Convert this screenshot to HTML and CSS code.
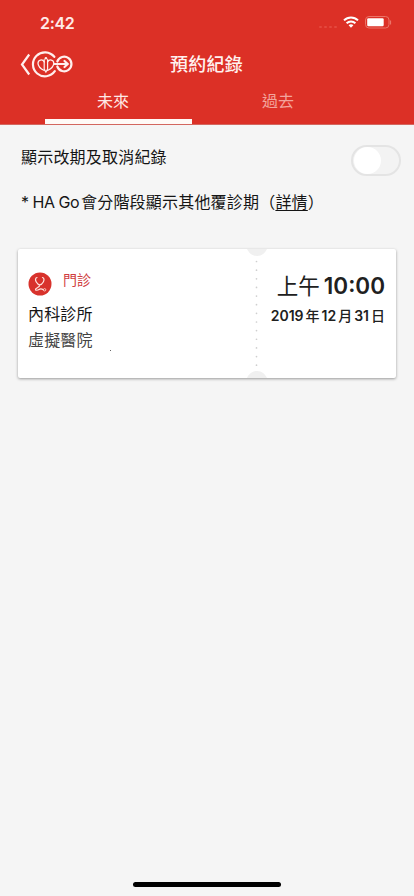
FILE: index.html
```html
<!DOCTYPE html>
<html lang="zh-Hant">
<head>
<meta charset="utf-8">
<meta name="viewport" content="width=device-width, initial-scale=1">
<title>預約紀錄</title>
<link rel="stylesheet" href="styles.css">
</head>
<body>
<header class="header">
  <div class="status">
    <span class="clock">2:42</span>
    <div class="indicators">
      <span class="signal"><i></i><i></i><i></i><i></i></span>
      <svg class="wifi" width="16" height="12" viewBox="0 0 16 12" fill="none" stroke="#fff" stroke-width="2">
        <path d="M1 4.400C5 .4 11 .4 15 4.400M3.600 7.200c2.500-2.400 6.300-2.400 8.800 0"/>
        <path d="M5.600 9.300c1.300-1.300 3.500-1.300 4.800 0L8 11.700z" fill="#fff" stroke="none"/>
      </svg>
      <svg class="battery" width="27" height="13" viewBox="0 0 27 13" fill="none">
        <rect x=".5" y=".5" width="23.500" height="11.500" rx="3.500" stroke="#ec7468"/>
        <rect x="2.200" y="2.200" width="16.500" height="8.100" rx="1.200" fill="#fff"/>
        <path d="M25.500 4.500v4" stroke="#ec7468" stroke-width="1.200"/>
      </svg>
    </div>
  </div>
  <div class="navbar">
    <a class="back">
      <svg width="53" height="28" viewBox="0 0 53 28" fill="none" stroke="#ffefed" stroke-linecap="round">
        <path d="M9.200 4.500L2 14.500l7.200 10" stroke-width="2.200" stroke-linecap="butt"/>
        <path d="M34.300 6.800A12 12 0 1 0 34.800 21.200" stroke-width="2.200"/>
        <path d="M37.300 11.500a7.300 7.300 0 1 1 0 5" stroke-width="2.200"/>
        <path d="M34.500 14h12.500M44.500 11l3.200 3-3.200 3" stroke-width="2.200"/>
        <path d="M24.300 20.500c-4.500-2.200-6.300-4.600-6.300-7.300 0-3.500 4.500-4.600 6.300-1.200M27.500 20.500c4.500-2.200 6.300-4.600 6.300-7.300 0-3.500-4.500-4.600-6.300-1.200" stroke-width="1.300"/>
        <path d="M24.200 9.500v9.500l1.700 3 1.700-3V9.500" stroke-width="1.200"/>
        <circle cx="25.900" cy="8.200" r="1.300" fill="#ffefed" stroke="none"/>
      </svg>
    </a>
    <h1 class="title">預約紀錄</h1>
  </div>
  <nav class="tabs">
    <a class="tab tab-active"><span>未來</span></a>
    <a class="tab"><span>過去</span></a>
  </nav>
</header>
<main class="content">
  <div class="option">
    <span class="option-label">顯示改期及取消紀錄</span>
    <span class="toggle"><span class="knob"></span></span>
  </div>
  <p class="note"><span class="latin">* HA Go</span><span>會分階段顯示其他覆診期</span><span>（</span><a class="link">詳情</a>）</p>
  <article class="card">
    <section class="place">
      <div class="kind">
        <svg width="24" height="24" viewBox="0 0 24 24" fill="none">
          <circle cx="12" cy="12" r="11.500" fill="#d8322c"/>
          <path d="M9 5.500C6.800 6 7.500 8.500 8.300 10s2 2.800 3.500 2.800 2.700-1.300 3.500-2.800 1.300-4-.8-4.500M11.800 12.800c.2 3-4.300 2.700-4.300 4.700 0 1.200 2.300.8 3.500 0 1.700-1.100 3-.6 4.300.3" stroke="#ffe4df" stroke-width="1.200" stroke-linecap="round"/>
          <circle cx="16.600" cy="17.800" r="1.200" stroke="#ffd0ca" stroke-width=".9"/>
        </svg>
        <span class="kind-name">門診</span>
      </div>
      <div class="clinic">內科診所</div>
      <div class="hospital"><span>虛擬醫院</span><i class="speck"></i></div>
    </section>
    <div class="perforation">
      <svg width="20" height="129" viewBox="0 0 20 129">
        <path d="M0 0h20c-2 4-5 7-10 7S2 4 0 0zM0 129h20c-2-4-5-7-10-7s-8 3-10 7z" fill="#f0f0f0"/>
        <path d="M9.500 12.500V119" stroke="#cfcfcf" stroke-width="1.700" stroke-linecap="round" stroke-dasharray="0 8.640"/>
      </svg>
    </div>
    <section class="when">
      <div class="time"><span>上午</span><b class="time-num">10:00</b></div>
      <div class="date"><b>2019</b><span>年</span><b>12</b><span>月</span><b>31</b><span>日</span></div>
    </section>
  </article>
</main>
<footer class="home"><span class="home-bar"></span></footer>
</body>
</html>
```

FILE: styles.css
```css
* { box-sizing: border-box; }
body {
  margin: 0;
  height: 896px;
  display: flex;
  flex-direction: column;
  overflow: hidden;
  background: #f5f5f5;
  color: #151515;
  font-family: Inter, "Noto Sans CJK TC", sans-serif;
  font-size: 16px;
}
.header {
  height: 125px;
  background: #dc3026;
  color: #fff;
  border-bottom: 1px solid #d3675f;
}
.status {
  height: 46px;
  display: flex;
  justify-content: space-between;
  padding: 0 22px 0 40px;
}
.clock { font-size: 16px; font-weight: 600; line-height: 46px; letter-spacing: -.3px; color: #ffeae7; }
.indicators { display: flex; align-items: flex-start; padding-top: 16px; }
.signal { display: flex; gap: 2px; padding: 10px 6px 0 0; }
.signal i { width: 3px; height: 2px; border-radius: 1px; background: #e4483e; }
.wifi { margin-right: 6px; }
.navbar {
  height: 36px;
  display: grid;
  grid-template-columns: 1fr auto 1fr;
  align-items: center;
}
.back { padding-left: 20px; display: flex; }
.title { margin: 0; padding: 2px 1px 0 0; font-size: 18px; line-height: 34px; font-weight: 500; letter-spacing: .3px; color: #fff1ef; }
.tabs { height: 42px; display: flex; gap: 18px; padding-left: 45px; }
.tab { width: 147px; padding-right: 11px; text-align: center; line-height: 38px; color: #f3a49c; }
.tab-active { color: #ffe9e6; border-bottom: 5px solid #fffaf7; }
.content { flex: 1; }
.option {
  height: 50px;
  display: flex;
  justify-content: space-between;
  padding: 20px 13px 0 21px;
}
.option-label { line-height: 25px; letter-spacing: .2px; }
.toggle {
  width: 50px;
  height: 31px;
  padding: 1px;
  border: 2px solid #e4e4e4;
  border-radius: 16px;
  background: #f3f3f3;
}
.knob { display: block; width: 27px; height: 27px; margin-top: -1px; border-radius: 50%; background: #fff; }
.note { margin: 15px 0 0 21px; line-height: 24px; letter-spacing: .2px; white-space: nowrap; }
.latin { margin-right: 2px; letter-spacing: -.5px; }
.link { text-decoration: underline; text-underline-offset: 2px; }
.card {
  width: 378px;
  height: 129px;
  margin: 35px 0 0 18px;
  display: grid;
  grid-template-columns: 229px 20px 1fr;
  background: #fff;
  border-radius: 2px;
  box-shadow: 0 1px 3px rgba(0, 0, 0, .38);
}
.place { padding: 19px 0 0 10px; }
.kind { height: 31px; display: flex; }
.kind svg { margin-top: 4px; }
.kind-name { margin-left: 11px; font-size: 14px; line-height: 24px; color: #cf3d40; }
.clinic { height: 28px; line-height: 30px; letter-spacing: .15px; }
.hospital { display: flex; line-height: 26px; letter-spacing: .15px; color: #444; }
.speck { width: 1px; height: 1px; margin: 23px 0 0 17px; background: #666; }
.when { padding: 21px 11px 0 0; color: #202020; }
.time { display: flex; justify-content: flex-end; align-items: baseline; gap: 4px; font-size: 21.5px; line-height: 32px; font-weight: 400; }
.time-num { font-size: 22.5px; font-weight: 600; }
.date { display: flex; justify-content: flex-end; gap: 2px; margin-top: 1px; font-size: 14px; line-height: 26px; font-weight: 500; white-space: nowrap; }
.date b { font-weight: 600; }
.home { height: 14px; display: flex; justify-content: center; align-items: flex-start; }
.home-bar { width: 148px; height: 5px; border-radius: 3px; background: #000; }
```
